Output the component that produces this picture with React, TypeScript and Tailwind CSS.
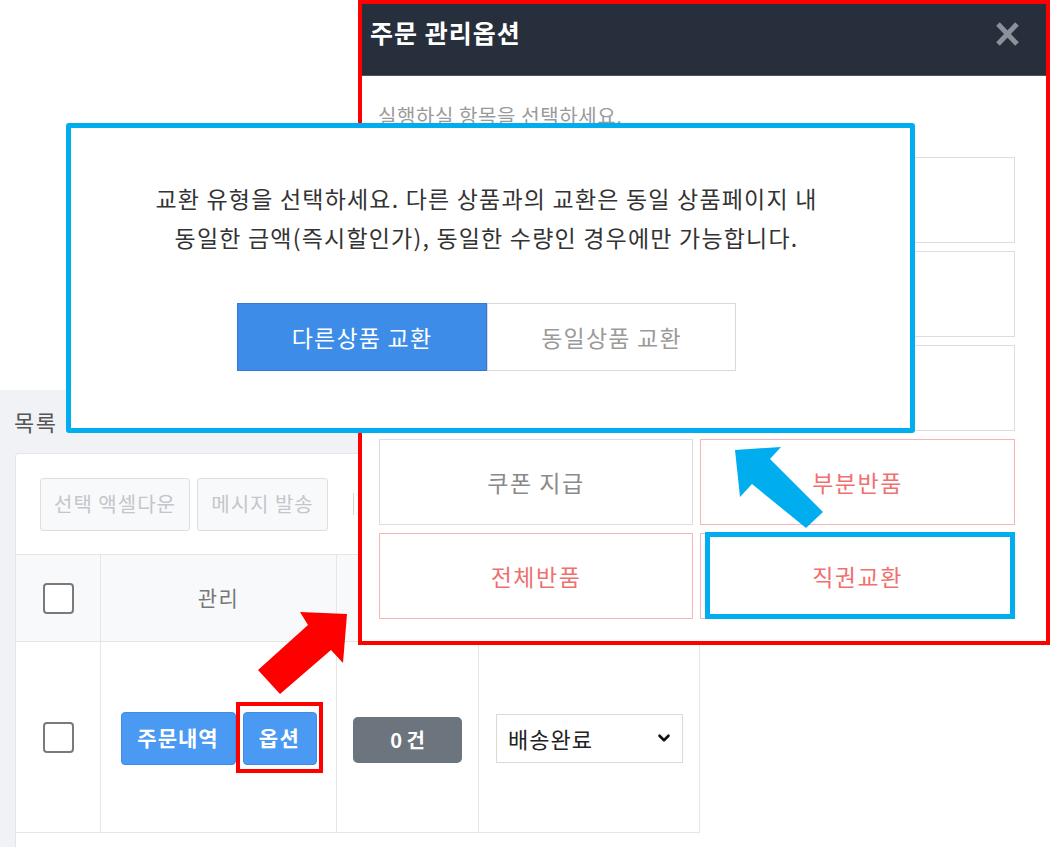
import { ChevronDown } from "lucide-react";

const Checkbox = () => (
  <span className="block w-[31px] h-[31px] border-2 border-[#7a7a7a] rounded-[4px] bg-white" />
);

const OptionBox = ({
  label,
  tone,
  marked,
}: {
  label?: string;
  tone: "gray" | "pink";
  marked?: boolean;
}) => (
  <div
    className={`relative h-[86px] flex items-center justify-center border text-[23px] tracking-[1.5px] ${
      tone === "pink"
        ? "border-[#f6b4b4] text-[#f07070]"
        : "border-[#dcdde0] text-[#8a8a8a]"
    }`}
  >
    {label}
    {marked && (
      <div className="absolute -top-[2px] -bottom-[1px] left-[4px] -right-[1px] border-[5px] border-[#00aeef]" />
    )}
  </div>
);

const OrderListPage = () => (
  <div className="absolute left-0 top-[390px] w-[705px] h-[457px] bg-[#f0f2f5] flex flex-col overflow-hidden">
    <div className="h-[63px] pl-[14px] flex items-center text-[22px] tracking-[1.5px] text-[#555]">목록</div>

    <div className="ml-[15px] flex-1 bg-white border-l border-t border-[#e2e5e9] rounded-tl-[4px] flex flex-col">
      {/* toolbar */}
      <div className="h-[100px] px-[24px] flex items-center gap-[7px]">
        <button className="w-[150px] h-[53px] rounded-[3px] border border-[#dedede] bg-[#f8f9fa] text-[20px] tracking-[1px] text-[#c3c6ca]">
          선택 액셀다운
        </button>
        <button className="w-[131px] h-[53px] rounded-[3px] border border-[#dedede] bg-[#f8f9fa] text-[20px] tracking-[1px] text-[#c3c6ca]">
          메시지 발송
        </button>
        <span className="ml-[18px] w-px h-[22px] bg-[#d5d5d5]" />
      </div>

      {/* table */}
      <div className="border-t border-[#e6e6e6] w-[684px]">
        <div className="grid grid-cols-[85px_236px_142px_221px] h-[87px] bg-[#f8f9fa] border-b border-r border-[#e6e6e6]">
          <div className="flex items-center justify-center border-r border-[#e6e6e6]">
            <Checkbox />
          </div>
          <div className="flex items-center justify-center border-r border-[#e6e6e6] text-[21px] tracking-[1.5px] text-[#777]">
            관리
          </div>
          <div className="border-r border-[#e6e6e6]" />
          <div />
        </div>

        <div className="grid grid-cols-[85px_236px_142px_221px] h-[191px] border-b border-r border-[#e6e6e6]">
          <div className="flex items-center justify-center border-r border-[#e6e6e6]">
            <Checkbox />
          </div>
          <div className="flex items-center justify-center gap-[7px] border-r border-[#e6e6e6] pt-[2px]">
            <button className="w-[115px] h-[53px] rounded-[4px] bg-[#4a99f3] border border-[#3f8ce6] text-white text-[21px] tracking-[1px] font-bold">
              주문내역
            </button>
            <span className="relative">
              <button className="w-[74px] h-[53px] rounded-[4px] bg-[#4a99f3] border border-[#3f8ce6] text-white text-[21px] tracking-[1.5px] font-bold">
                옵션
              </button>
              <span className="absolute -left-[7px] -right-[6px] -top-[10px] -bottom-[8px] border-4 border-[#ff0000]" />
            </span>
          </div>
          <div className="flex items-center justify-center border-r border-[#e6e6e6] pt-[5px]">
            <span className="w-[109px] h-[46px] rounded-[5px] bg-[#6c757d] text-white text-[20px] font-bold flex items-center justify-center">
              0 건
            </span>
          </div>
          <div className="flex items-center pl-[17px] pt-[2px]">
            <div className="w-[187px] h-[49px] border border-[#dadada] flex items-center justify-between pl-[11px] pr-[9px] text-[22px] tracking-[1px] text-[#222]">
              배송완료
              <ChevronDown size={18} strokeWidth={3.5} color="#111" />
            </div>
          </div>
        </div>
      </div>
    </div>
  </div>
);

const OrderOptionModal = () => (
  <div className="absolute left-[358px] top-0 w-[692px] h-[645px] border-4 border-[#ff0000] bg-white flex flex-col">
    <div className="h-[72px] bg-[#272f3d] border-b border-[#4b5362] flex items-start justify-between pl-[8px] pr-[26px] pt-[11px]">
      <h2 className="text-[25px] leading-[34px] font-bold text-white tracking-[1px]">주문 관리옵션</h2>
      <svg width="25" height="24" viewBox="0 0 25 24" className="mt-[7px]">
        <path d="M3 2 L22 22 M22 2 L3 22" stroke="#8b9099" strokeWidth="5" />
      </svg>
    </div>

    <div className="pl-[17px] pr-[31px]">
      <p className="mt-[26px] -ml-[1px] text-[20px] leading-[28px] tracking-[0.6px] text-[#9a9a9a]">
        실행하실 항목을 선택하세요.
      </p>
      <div className="mt-[27px] grid grid-cols-[314px_315px] gap-x-[7px] gap-y-[8px]">
        <OptionBox tone="gray" />
        <OptionBox tone="gray" />
        <OptionBox tone="gray" />
        <OptionBox tone="gray" />
        <OptionBox tone="gray" />
        <OptionBox tone="gray" />
        <OptionBox tone="gray" label="쿠폰 지급" />
        <OptionBox tone="pink" label="부분반품" />
        <OptionBox tone="pink" label="전체반품" />
        <OptionBox tone="pink" label="직권교환" marked />
      </div>
    </div>
  </div>
);

const ExchangeTypePopup = () => (
  <div className="absolute left-[66px] top-[123px] w-[849px] h-[310px] border-[5px] border-[#00aeef] rounded-[3px] bg-white flex flex-col items-center">
    <p className="mt-[51px] pr-[8px] text-center text-[23px] leading-[39px] text-[#333] tracking-[1.2px]">
      교환 유형을 선택하세요. 다른 상품과의 교환은 동일 상품페이지 내
      <br />
      동일한 금액(즉시할인가), 동일한 수량인 경우에만 가능합니다.
    </p>
    <div className="mt-[46px] -ml-[8px] flex">
      <button className="w-[250px] h-[68px] bg-[#3d8de8] border border-[#2f7bd6] text-white text-[23px] tracking-[1.2px]">
        다른상품 교환
      </button>
      <button className="w-[249px] h-[68px] bg-white border border-[#dadada] text-[#9a9a9a] text-[23px] tracking-[1.2px]">
        동일상품 교환
      </button>
    </div>
  </div>
);

export default function App() {
  return (
    <div className="relative w-[1052px] h-[847px] bg-white overflow-hidden font-['Noto_Sans_CJK_KR',sans-serif]">
      <OrderListPage />
      <OrderOptionModal />
      <ExchangeTypePopup />

      {/* red arrow: 옵션 -> modal */}
      <svg className="absolute left-[250px] top-[605px]" width="105" height="95" viewBox="0 0 105 95">
        <polygon points="97,9 50,7 58,20 8,65 30,89 81,45 93,58" fill="#ff0000" />
      </svg>

      {/* blue arrow: 직권교환 -> popup */}
      <svg className="absolute left-[730px] top-[443px]" width="96" height="88" viewBox="0 0 96 88">
        <polygon points="5,7 51,4 40,16 93,69 76,85 22,41 10,54" fill="#00aeef" />
      </svg>
    </div>
  );
}
